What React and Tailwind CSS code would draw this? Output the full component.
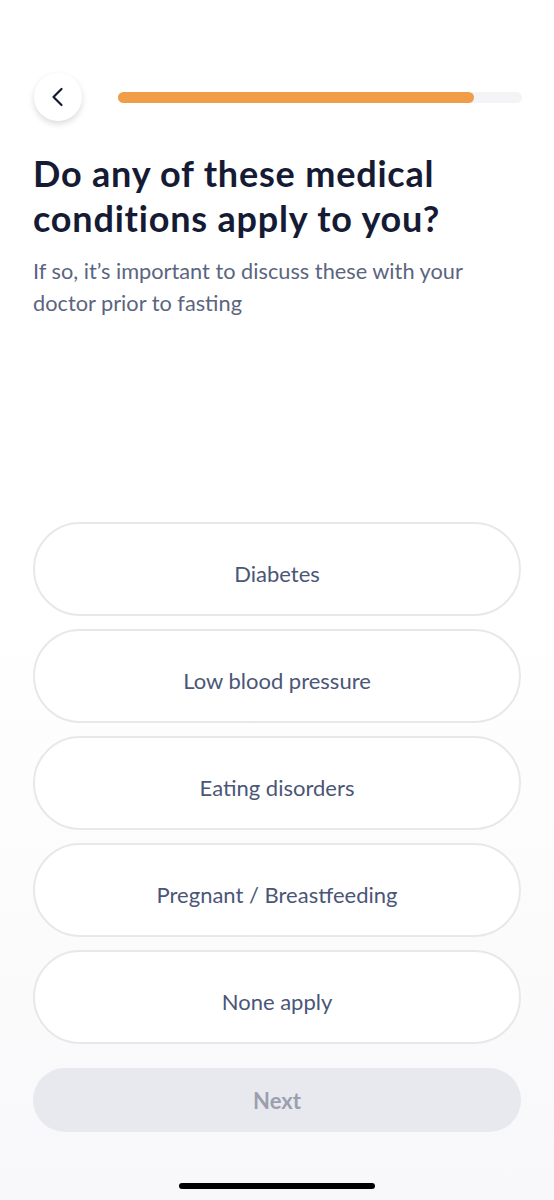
export default function App() {
  const options = ["Diabetes", "Low blood pressure", "Eating disorders", "Pregnant / Breastfeeding", "None apply"];
  return (
    <div className="w-[554px] h-[1200px] flex flex-col bg-gradient-to-b from-white via-white to-[#f8f8fa] font-['Lato',sans-serif] overflow-hidden">
      <div className="flex items-center pt-[73px] pl-[34px] pr-[32px]">
        <button className="w-12 h-12 rounded-full bg-white shadow-[0_3px_6px_rgba(0,0,0,0.14)] flex items-center justify-center shrink-0">
          <svg width="24" height="24" viewBox="0 0 24 24" fill="none" stroke="#111a33" strokeWidth="2.2" strokeLinecap="round" strokeLinejoin="round">
            <path d="M15.5 4 L7.5 12 L15.5 20" />
          </svg>
        </button>
        <div className="ml-[36px] flex-1 h-[11px] rounded-full bg-[#f4f4f6]">
          <div className="h-full w-[88%] rounded-full bg-[#f09c48]" />
        </div>
      </div>
      <div className="px-[33px] mt-[30px]">
        <h1 className="text-[36px] leading-[45px] font-bold tracking-[0.8px] text-[#151b34]">
          Do any of these medical conditions apply to you?
        </h1>
        <p className="mt-[14px] pr-[40px] text-[21.75px] leading-[32px] text-[#5b6580]">
          If so, it’s important to discuss these with your doctor prior to fasting
        </p>
      </div>
      <div className="flex flex-col gap-[13px] px-[33px] mt-[203px]">
        {options.map((o) => (
          <button key={o} className="h-[94px] pt-[8px] rounded-full bg-white border-2 border-[#e8e8eb] text-[22px] text-[#4b5677] flex items-center justify-center">
            {o}
          </button>
        ))}
      </div>
      <div className="px-[33px] mt-[24px]">
        <button className="w-full h-[64px] rounded-full bg-[#e8e9ee] text-[22px] font-bold text-[#9c9fae]">Next</button>
      </div>
      <div className="flex justify-center mt-auto mb-[11px]">
        <div className="w-[196px] h-[6px] rounded-full bg-black" />
      </div>
    </div>
  );
}
